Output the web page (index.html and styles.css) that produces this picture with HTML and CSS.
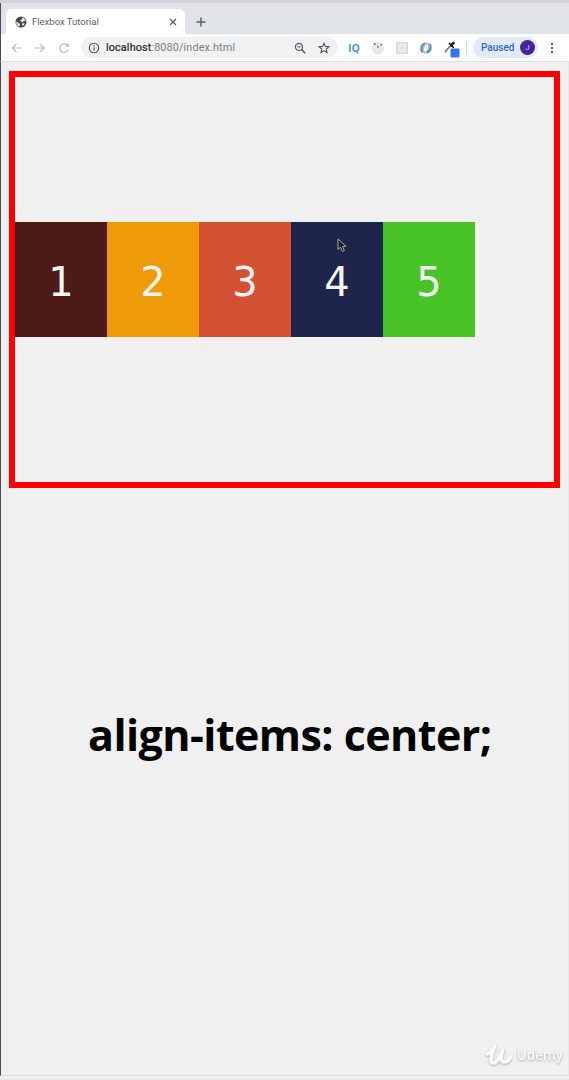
FILE: index.html
```html
<!DOCTYPE html>
<html lang="en">
<head>
<meta charset="utf-8">
<title>Flexbox Tutorial</title>
<link rel="stylesheet" href="styles.css">
</head>
<body>
<div class="window">
  <header class="tabs">
    <div class="tab">
      <svg class="globe" viewBox="0 0 12 12"><circle cx="6" cy="6" r="5.5" fill="#45484c"/><path d="M1.3 5.2 3.6 7.2 4.8 7.5 4.8 9.8 3.8 10.2C2 9.3 1 7.5 1.3 5.2ZM7 1.4C9 1.7 10.5 3.6 10.7 5.3L8.7 4.8 8 6.2 6.3 5.7 4.8 4.5 6.8 3.8ZM7.5 7 9.8 7.8 8.5 9.7 7 8.8Z" fill="#eceeef"/></svg>
      <span class="tab-title">Flexbox Tutorial</span>
      <svg class="close" viewBox="0 0 8 8"><path d="m1 1 6 6M7 1 1 7" stroke="#55595e" stroke-width="1.2"/></svg>
    </div>
    <svg class="plus" viewBox="0 0 10 10"><path d="M5 .5v9M.5 5h9" stroke="#5b6066" stroke-width="1.5"/></svg>
  </header>
  <nav class="toolbar">
    <svg class="nav-icons" viewBox="0 0 60 14" fill="none" stroke="#b7b9bc" stroke-width="1.2"><path d="M11.5 7h-9M6.500 2.800 2.300 7l4.200 4.200M25 7h9M30 2.800 34.200 7 30 11.200"/><path d="M57.300 4.300A4.300 4.300 0 1 0 58.300 8.200"/><path d="M58.800 1.800v4h-4Z" fill="#b7b9bc" stroke="none"/></svg>
    <div class="address">
      <svg class="info" viewBox="0 0 12 12"><circle cx="6" cy="6" r="4.700" fill="none" stroke="#55595e" stroke-width="1.100"/><path d="M6 5.300v3.200M6 3.200v1.200" stroke="#55595e" stroke-width="1.200"/></svg>
      <span class="url"><b>localhost</b>:8080/index.html</span>
      <svg class="search" viewBox="0 0 12 12" fill="none" stroke="#5a5e63"><circle cx="4.900" cy="4.900" r="3.500" stroke-width="1.200"/><path d="m7.500 7.500 3.600 3.600" stroke-width="1.500"/><path d="M3.200 4.900h3.400"/></svg>
      <svg class="star" viewBox="0 0 12 12"><path d="m6 1.200 1.400 3.200 3.500.3-2.650 2.300.8 3.500L6 8.700l-3.050 1.800.8-3.500L1.100 4.700l3.500-.3Z" fill="none" stroke="#53575c" stroke-width="1.100"/></svg>
    </div>
    <div class="extensions">
      <span class="iq">IQ</span>
      <svg class="ext" viewBox="0 0 14 14"><circle cx="7" cy="7.500" r="5.700" fill="#e9e9e9" stroke="#dddddd" stroke-width=".6"/><path d="m2.300 3 2-1.200.7 1.300-1.700 1ZM9.700 2.700l1.700.8-.7 1.200-1.500-.8Z" fill="#66686a"/><circle cx="6.900" cy="5.800" r="1" fill="#77797b"/></svg>
      <svg class="ext" viewBox="0 0 14 14"><rect x="1.500" y="1.500" width="11" height="11" fill="#e5e5e5" stroke="#d8d8d8"/><circle cx="7" cy="7" r="3" fill="none" stroke="#efefef" stroke-width="1.200"/></svg>
      <svg class="ext" viewBox="0 0 14 14"><circle cx="7" cy="7" r="5.600" fill="#a4bed6"/><path d="M6 2.200C2.800 3.700.9 7.500 3.300 11.300M8 11.800c3.200-1.500 5.100-5.300 2.700-9.100" fill="none" stroke="#5689b5" stroke-width="1.800"/><ellipse cx="7" cy="7" rx="1.800" ry="3.600" transform="rotate(20 7 7)" fill="#f5f8fb"/></svg>
      <svg class="picker" viewBox="0 0 16 18"><path d="M1.300 12.600 2.100 10.500 7 5.500" fill="none" stroke="#637267" stroke-width="1.500"/><path d="m5.400 3.400 4 4" stroke="#202124" stroke-width="1.500" stroke-linecap="round"/><path d="m7.300 5.300 2.300-2.400" stroke="#202124" stroke-width="2.700" stroke-linecap="round"/><rect x="6.500" y="8.500" width="9" height="9" rx="1" fill="#3478e5"/></svg>
    </div>
    <div class="divider"></div>
    <div class="profile"><span>Paused</span><i class="avatar">J</i></div>
    <svg class="menu" viewBox="0 0 4 12" fill="#5f6368"><circle cx="2" cy="2" r="1.200"/><circle cx="2" cy="6" r="1.200"/><circle cx="2" cy="10" r="1.200"/></svg>
  </nav>
  <main class="page">
    <section class="container">
      <div class="box box-1">1</div>
      <div class="box box-2">2</div>
      <div class="box box-3">3</div>
      <div class="box box-4">4<svg class="cursor" viewBox="0 0 10 15"><path d="M1 1v10.500l2.500-2.300 1.900 4.200 2-.9-1.900-4.100H9Z" fill="#18191f" stroke="#b8b8b8" stroke-width=".9"/></svg></div>
      <div class="box box-5">5</div>
    </section>
    <p class="caption">align-items: center;</p>
    <footer class="brand">
      <svg class="brand-mark" viewBox="0 0 28 24" fill="none" stroke-linecap="round" stroke-linejoin="round"><path d="M2.500 11C5.500 9.500 7.500 7 9.500 3.500C7 10 3.500 20 8.500 20C13 20 16 11 18 6.500C15.500 14 15.500 19 19 19C22 19 24 17 25.500 14.500" stroke="#fafafa" stroke-width="3.500"/></svg>
      <span>Udemy</span>
    </footer>
  </main>
</div>
</body>
</html>
```
FILE: styles.css
```css
* { box-sizing: border-box; }
body { margin: 0; background: #f0f0f0; }
svg { display: block; flex: none; }
.window {
  width: 569px;
  height: 1080px;
  display: flex;
  flex-direction: column;
  border-top: 3px solid #d3d4d9;
  border-bottom: 1px solid #e4e4e4;
  font-family: Roboto, "Liberation Sans", sans-serif;
}
.tabs {
  height: 31px;
  display: flex;
  align-items: center;
  padding: 6px 0 0 6px;
  background: #e0e3e7;
  border-left: 1px solid #494b50;
}
.tab {
  width: 179px;
  height: 25px;
  margin-left: -1px;
  display: flex;
  align-items: center;
  padding: 0 8px 0 9px;
  background: #fff;
  border-radius: 6px 6px 0 0;
}
.globe { width: 12px; height: 12px; }
.tab-title { margin-left: 5px; flex: 1; font-size: 9.5px; line-height: 12px; color: #5c6065; }
.close { width: 8px; height: 8px; }
.plus { width: 10px; height: 10px; margin-left: 11px; }
.toolbar {
  height: 28px;
  display: flex;
  align-items: center;
  padding-left: 9px;
  background: #fff;
  border-left: 1px solid #494b50;
  border-bottom: 1px solid #dfdfdf;
}
.nav-icons { width: 60px; height: 14px; }
.address {
  width: 257px;
  height: 21px;
  margin-left: 11px;
  display: flex;
  align-items: center;
  padding: 0 8px 0 7px;
  background: #eff1f2;
  border-radius: 11px;
}
.info { width: 12px; height: 12px; }
.url { flex: 1; margin-left: 6px; font-size: 10.8px; line-height: 14px; letter-spacing: .14px; color: #7c8084; white-space: nowrap; }
.url b { font-weight: 400; color: #202124; -webkit-text-stroke: .2px #202124; }
.search { width: 12px; height: 12px; }
.star { width: 12px; height: 12px; margin-left: 12px; }
.extensions { display: flex; align-items: center; gap: 10px; margin-left: 10px; }
.iq { width: 13px; font: 700 10.5px/14px "Open Sans", sans-serif; color: #4896d0; }
.ext { width: 14px; height: 14px; }
.picker { width: 16px; height: 18px; margin: 2px 0 0 1px; }
.divider { width: 1px; height: 12px; margin-left: 6px; background: #d5d8dc; }
.profile {
  width: 65px;
  height: 21px;
  margin-left: 6px;
  display: flex;
  align-items: center;
  justify-content: space-between;
  padding: 0 3px 0 8px;
  border-radius: 11px;
  background: #e1ebf9;
  color: #2f68bf;
  font-size: 10px;
  font-weight: 500;
}
.avatar {
  width: 15px;
  height: 15px;
  border-radius: 50%;
  background: #48239c;
  color: #d9cfee;
  font-style: normal;
  font-weight: 400;
  font-size: 8px;
  line-height: 15px;
  text-align: center;
}
.menu { width: 4px; height: 12px; margin-left: 12px; }
.page {
  height: 1014px;
  display: flex;
  flex-direction: column;
  padding: 9px 8px 0 8px;
  border-left: 1px solid #494b50;
  border-right: 1px solid #e8e8e8;
  border-bottom: 1px solid #dcdcdc;
  background: #f0f0f0;
}
.container {
  width: 551px;
  height: 417px;
  display: flex;
  align-items: center;
  border: 6px solid #fe0000;
}
.box {
  position: relative;
  width: 92px;
  height: 115px;
  display: flex;
  align-items: center;
  justify-content: center;
  padding-top: 5px;
  color: #f3f3f1;
  font: 40px/1 "DejaVu Sans", sans-serif;
}
.box-1 { background: #4c1a17; }
.box-2 { background: #ef9a09; }
.box-3 { background: #d35133; }
.box-4 { background: #1d254b; }
.box-5 { background: #48c426; }
.cursor { position: absolute; left: 46px; top: 16px; width: 10px; height: 15px; }
.caption {
  margin: 217px 0 0 79px;
  color: #000;
  font: 700 43px/60px "Open Sans", sans-serif;
  letter-spacing: -.55px;
  white-space: nowrap;
}
.brand {
  align-self: flex-end;
  display: flex;
  align-items: center;
  gap: 4px;
  margin: auto -3px 8px 0;
  color: #fafafa;
  font: 600 13.5px/24px "Open Sans", sans-serif;
  filter: drop-shadow(0 1px 1px #aaaaaa);
}
.brand-mark { width: 28px; height: 24px; }
```
